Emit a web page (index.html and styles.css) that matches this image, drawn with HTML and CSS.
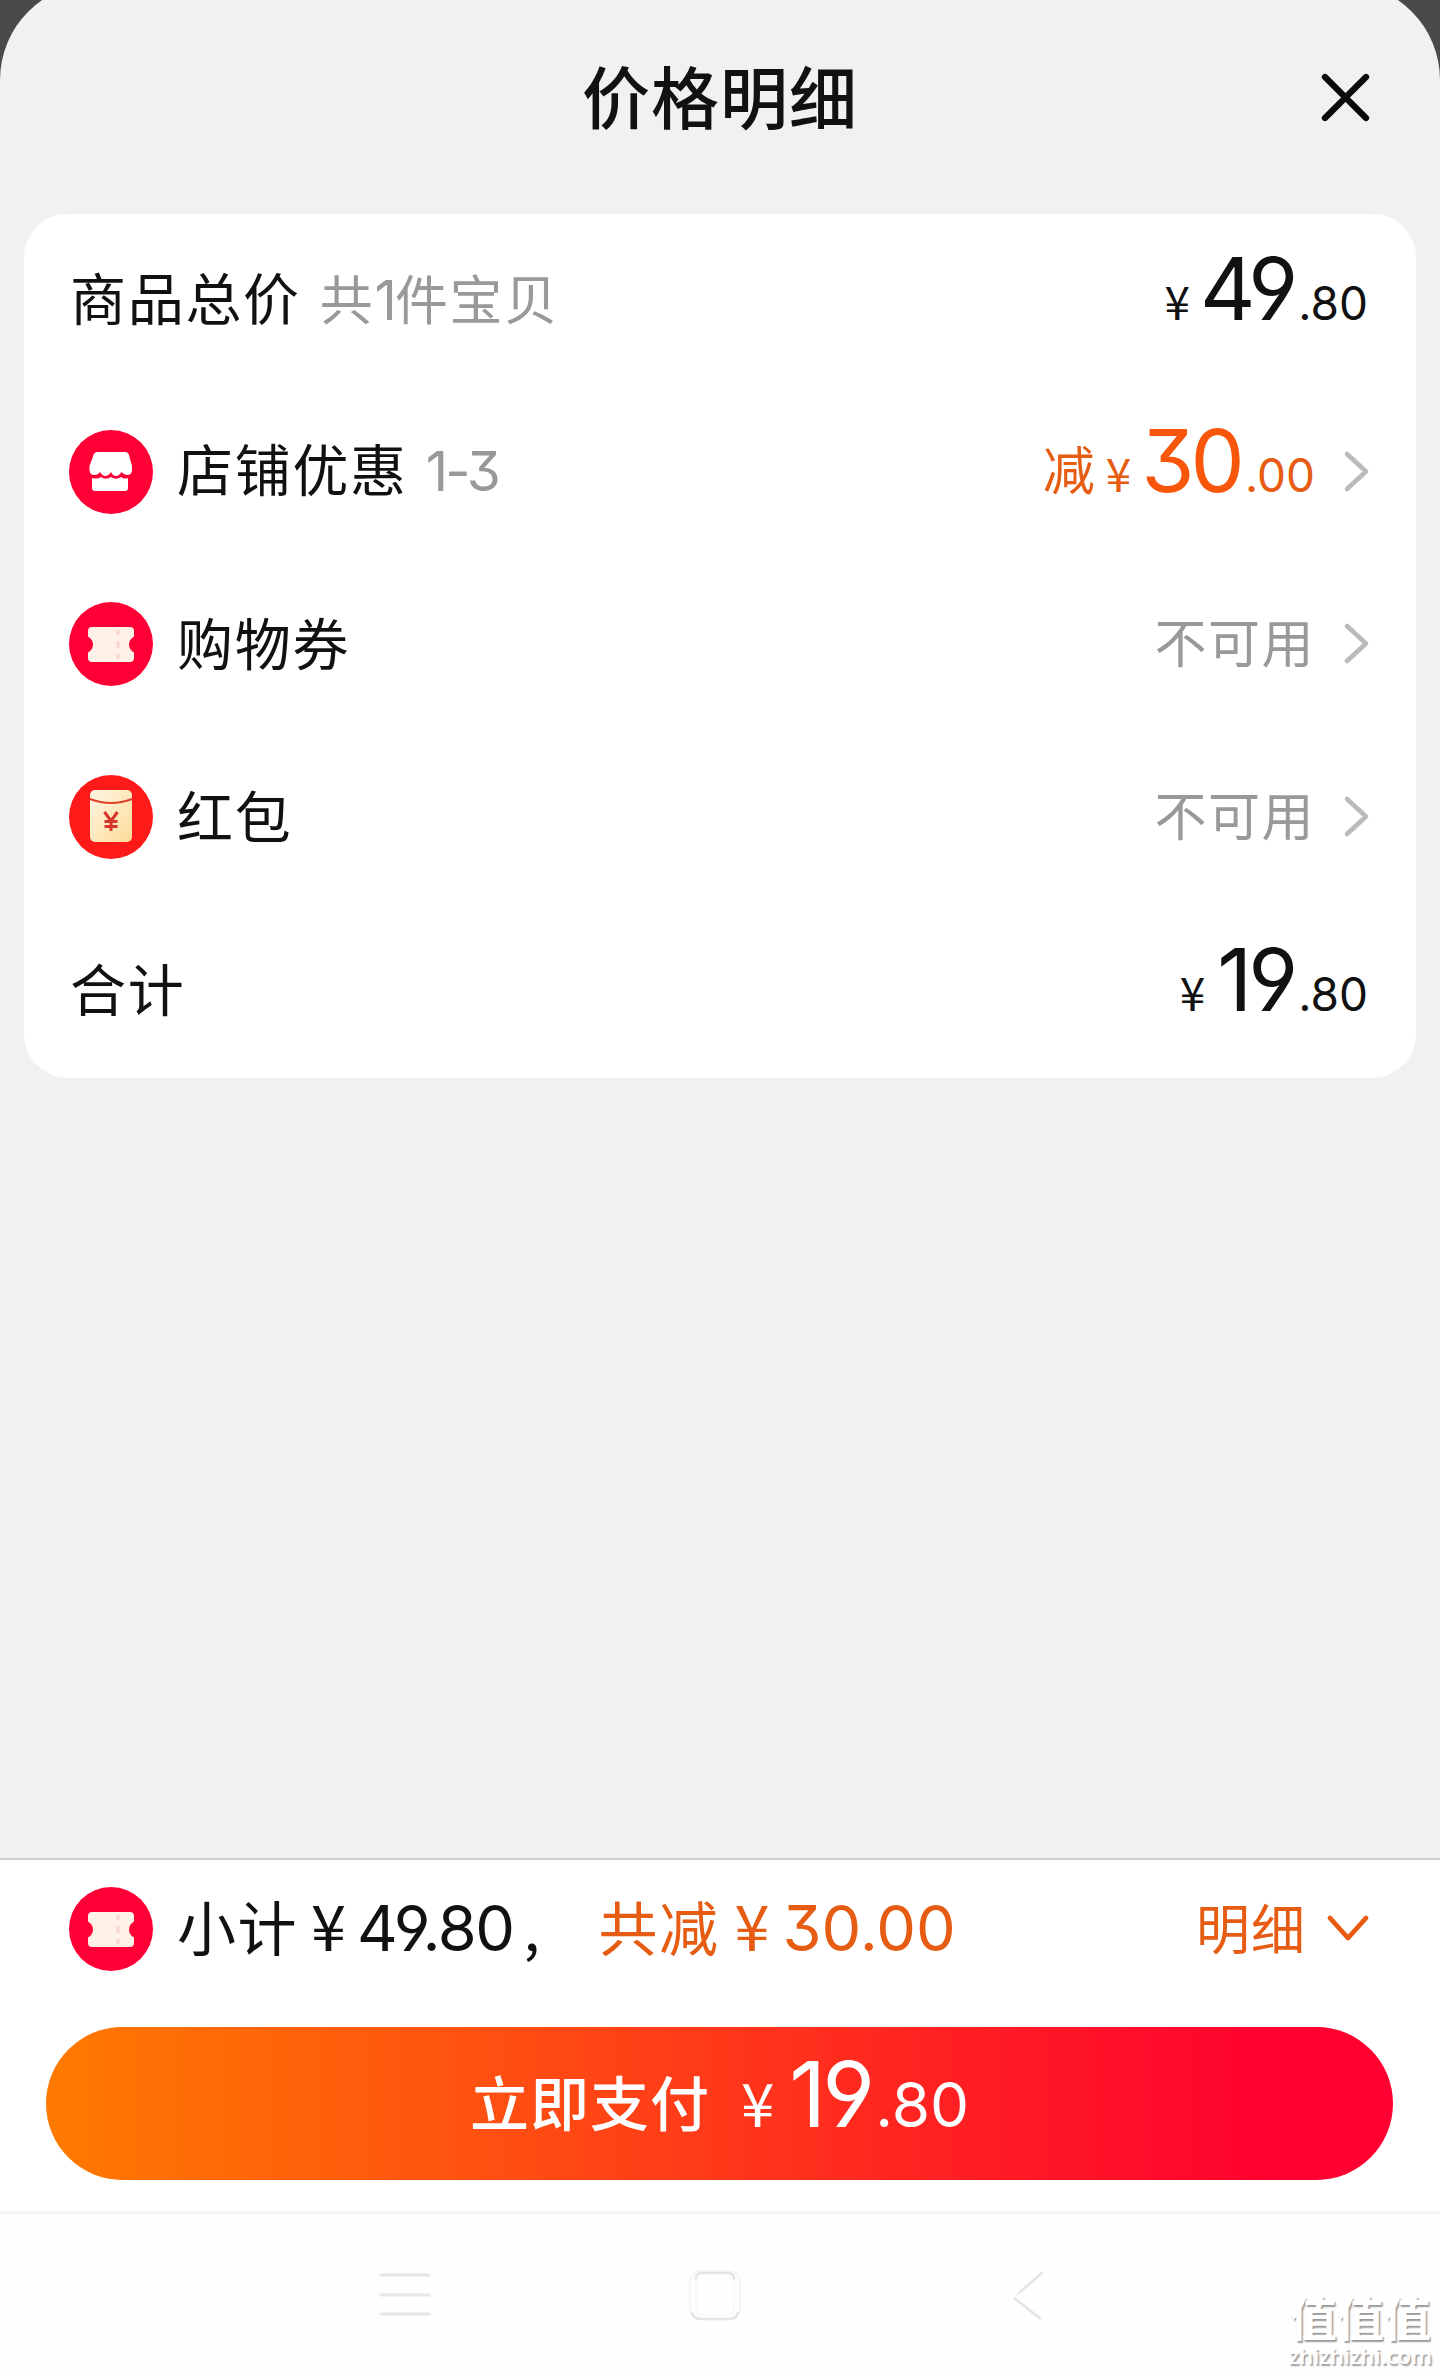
FILE: index.html
```html
<!DOCTYPE html>
<html lang="zh-CN">
<head>
<meta charset="utf-8">
<title>价格明细</title>
<link rel="stylesheet" href="styles.css">
</head>
<body>
<svg class="defs" width="0" height="0" aria-hidden="true">
  <defs>
    <linearGradient id="envelope" x1="0" y1="0" x2="1" y2="1">
      <stop offset="0" stop-color="#fff6e6"/>
      <stop offset="1" stop-color="#fddc97"/>
    </linearGradient>
    <symbol id="ticket" viewBox="0 0 84 84">
      <circle cx="42" cy="42" r="42" fill="#ff0036"/>
      <path d="M23 25h38q4 0 4 4v5.500q-5 3-5 8t5 8V56q0 4-4 4H23q-4 0-4-4v-5.500q5-3 5-8t-5-8V29q0-4 4-4z" fill="#fff0e8"/>
      <path d="M49 28v5M49 39v7M49 52v5" stroke="#f8d5cb" stroke-width="3"/>
    </symbol>
    <symbol id="chevron" viewBox="0 0 28 44">
      <path d="M4 4l19 17.500L4 39" fill="none" stroke="#bababa" stroke-width="4.600" stroke-linecap="round" stroke-linejoin="round"/>
    </symbol>
  </defs>
</svg>
<main class="sheet">
  <header class="header">
    <h1 class="title">价格明细</h1>
    <svg class="close" viewBox="0 0 52 52"><path d="M5 5l41 41M46 5L5 46" stroke="#0b0b0b" stroke-width="6.300" stroke-linecap="round"/></svg>
  </header>

  <section class="card">
    <div class="row">
      <div class="label">商品总价<span class="note">共<span class="num">1</span>件宝贝</span></div>
      <div class="price"><span class="yen">¥</span><span class="whole">49</span><span class="cents">.80</span></div>
    </div>
    <div class="row">
      <svg class="icon" viewBox="0 0 84 84">
        <circle cx="42" cy="42" r="42" fill="#ff0036"/>
        <path d="M29 22h27q3 0 4 3l3 11v4q0 5-5 5-3 0-5.500-3-2.500 4-5.500 4-3 0-5-4-2.500 4-5.500 4-3 0-5.500-4-2 3-5.500 3-5 0-5-5v-4l4-11q1-3 4-3z" fill="#fff"/>
        <path d="M23 48q6 1.500 9-1 5 3.500 10 0 5 3.500 10 0 3 2.500 7 1v10q0 3-3 3H26q-3 0-3-3z" fill="#fff"/>
      </svg>
      <div class="label">店铺优惠<span class="note range"><span class="num">1-3</span></span></div>
      <div class="price discount"><span class="minus">减</span><span class="yen">¥</span><span class="whole">30</span><span class="cents">.00</span></div>
      <svg class="chevron"><use href="#chevron"/></svg>
    </div>
    <div class="row">
      <svg class="icon"><use href="#ticket"/></svg>
      <div class="label">购物券</div>
      <div class="status">不可用</div>
      <svg class="chevron"><use href="#chevron"/></svg>
    </div>
    <div class="row">
      <svg class="icon" viewBox="0 0 84 84">
        <circle cx="42" cy="42" r="42" fill="#ff1a1a"/>
        <rect x="21" y="15" width="42" height="52" rx="5" fill="url(#envelope)"/>
        <path d="M21 24q21 8 42 0" fill="none" stroke="#e0402c" stroke-width="2.200"/>
        <path d="M35.500 37l6.500 9 6.500-9M42 46v10M35.500 46.500h13M35.500 51.500h13" fill="none" stroke="#d8352c" stroke-width="3"/>
      </svg>
      <div class="label">红包</div>
      <div class="status">不可用</div>
      <svg class="chevron"><use href="#chevron"/></svg>
    </div>
    <div class="row">
      <div class="label">合计</div>
      <div class="price total"><span class="yen">¥</span><span class="whole">19</span><span class="cents">.80</span></div>
    </div>
  </section>
</main>

<footer class="footer">
  <div class="summary">
    <svg class="icon"><use href="#ticket"/></svg>
    <div class="sum">小计<span class="sum-yen">¥</span><span class="num">49.80</span><span class="comma">,</span></div>
    <div class="sum saved">共减<span class="sum-yen">¥</span><span class="num wide">30.00</span></div>
    <div class="toggle">明细</div>
    <svg class="toggle-arrow" viewBox="0 0 44 30"><path d="M4 4l18 20L40 4" fill="none" stroke="#ea5a10" stroke-width="4.800" stroke-linecap="round" stroke-linejoin="round"/></svg>
  </div>
  <div class="pay">
    <span class="pay-text">立即支付</span>
    <div class="price pay-price"><span class="yen">¥</span><span class="whole">19</span><span class="cents">.80</span></div>
  </div>
</footer>

<nav class="nav">
  <svg class="nav-icon menu" viewBox="0 0 56 56"><path d="M4 8h48M4 28h48M4 47h48" stroke="#e6e6e6" stroke-width="3" stroke-linecap="round"/></svg>
  <svg class="nav-icon home" viewBox="0 0 56 56"><rect x="3" y="4" width="50" height="48" rx="11" fill="none" stroke="#f3f3f3" stroke-width="1.500"/><path d="M9 12q0-6 6-6h26q6 0 6 6M5 46q2 6 9 6h28q7 0 9-6" fill="none" stroke="#e4e4e4" stroke-width="2.500" stroke-linecap="round"/><path d="M9 12v30q0 6 6 6h26q6 0 6-6V12" fill="none" stroke="#f5f5f5" stroke-width="1.200"/></svg>
  <svg class="nav-icon back" viewBox="0 0 56 56"><path d="M42 5L18 26M13 31l27 21" fill="none" stroke="#e4e4e4" stroke-width="2.500"/><path d="M18 26q-5 3-5 5" fill="none" stroke="#f1f1f1" stroke-width="2"/></svg>
  <div class="mark"><span class="mark-name">值值值</span><span class="mark-site">zhizhizhi.com</span></div>
</nav>
</body>
</html>
```
FILE: styles.css
```css
* { box-sizing: border-box; margin: 0; padding: 0; }

body {
  width: 1440px;
  height: 2376px;
  display: flex;
  flex-direction: column;
  overflow: hidden;
  background: #4a4a4a;
  color: #111;
  font-family: "Noto Sans CJK SC", sans-serif;
  line-height: 1;
  white-space: nowrap;
}

.defs { position: absolute; }

.sheet {
  height: 1875px;
  margin-top: -17px;
  flex: none;
  padding-top: 17px;
  border-radius: 97px 97px 0 0;
  background: #f1f1f1;
}

.header {
  height: 214px;
  display: grid;
  grid-template-columns: 1fr auto 1fr;
  align-items: start;
}
.title {
  grid-column: 2;
  margin-top: 60px;
  font-size: 68px;
  font-weight: 500;
  letter-spacing: 1px;
  line-height: 70px;
}
.close {
  justify-self: end;
  width: 52px;
  height: 52px;
  margin: 72px 68px 0 0;
}

.card {
  height: 864px;
  margin: 0 24px;
  padding: 1px 48px 0 45px;
  border-radius: 44px;
  background: #fff;
}
.row {
  height: 172.4px;
  padding-bottom: 3px;
  display: flex;
  align-items: center;
}
.icon { flex: none; width: 84px; height: 84px; }
.icon + .label { margin-left: 24px; padding-bottom: 6px; }
.label {
  flex: 1;
  margin-left: 1px;
  padding-bottom: 4px;
  font-size: 56px;
  letter-spacing: 1.7px;
}
.note {
  margin-left: 19px;
  color: #999;
  font-size: 53px;
  letter-spacing: 1.700px;
}
.num {
  font-family: "Inter", sans-serif;
  font-feature-settings: "cv04", "cv09";
}
.note .num { font-size: 55px; letter-spacing: -2px; }
.range { margin-left: 18px; }
.range .num { letter-spacing: -3px; }
.status {
  padding-bottom: 6px;
  color: #999;
  font-size: 52px;
  letter-spacing: 1.500px;
}
.chevron { flex: none; width: 28px; height: 44px; margin: 0 -3px 0 28px; }

.price {
  display: flex;
  align-items: baseline;
  padding-bottom: 8px;
  line-height: 86px;
}
.yen { font-size: 46px; margin-right: 10px; }
.whole, .cents {
  font-family: "Inter", sans-serif;
  font-feature-settings: "cv04", "cv09";
}
.whole { font-size: 86px; letter-spacing: -4px; margin-right: 4px; }
.cents { font-size: 46px; }
.total { padding-bottom: 4px; }
.total .yen { margin-right: 12px; }
.discount { color: #e65c13; }
.discount .whole { color: #f7560b; }
.minus { font-size: 52px; margin-right: 11px; transform: translateY(-2px); }

.footer {
  flex: none;
  height: 353px;
  border-top: 2px solid #d0d0d0;
  background: #fff;
}
.summary {
  height: 138px;
  padding: 0 69px;
  display: flex;
  align-items: center;
}
.sum {
  margin-left: 24px;
  padding-bottom: 7px;
  font-size: 59px;
  letter-spacing: 1.500px;
}
.sum .num { font-size: 63px; letter-spacing: -1.500px; }
.sum .wide { letter-spacing: 0; }
.sum-yen { margin: 0 11px 0 13px; font-size: 63px; letter-spacing: 0; }
.comma { margin-left: 10px; }
.saved { margin-left: 57px; }
.saved .sum-yen { margin: 0 13px 0 15px; }
.saved, .toggle { color: #e65c13; }
.toggle {
  margin-left: auto;
  padding-bottom: 4px;
  font-size: 54px;
  letter-spacing: 1px;
}
.toggle-arrow { width: 44px; height: 30px; margin: 0 1px 0 20px; }

.pay {
  height: 153px;
  margin: 29px 47px 0 46px;
  display: flex;
  align-items: center;
  justify-content: center;
  border-radius: 77px;
  background: linear-gradient(90deg, #ff7a00 0%, #ff4d12 35%, #ff2022 67%, #ff0030 92%);
  color: #fff;
}
.pay-text { padding-bottom: 6px; font-size: 59px; font-weight: 500; letter-spacing: 1px; }
.pay-price { margin-left: 31px; }
.pay-price .yen { font-size: 60px; margin-right: 15px; }
.pay-price .whole { font-size: 91px; }
.pay-price .cents { font-size: 62px; }

.nav {
  flex: none;
  position: relative;
  height: 165px;
  display: flex;
  align-items: flex-start;
  padding: 53px 0 0 377px;
  border-top: 3px solid #f6f6f6;
  background: #fefefe;
}
.nav-icon { width: 56px; height: 56px; }
.home { margin-left: 254px; }
.back { margin-left: 258px; }
.mark {
  margin: 29px 8px 0 auto;
  display: flex;
  flex-direction: column;
  align-items: center;
  color: #fff;
  text-shadow: 1.500px 1.500px 1.500px #999;
}
.mark-name {
  font-family: "Liberation Sans", "Noto Sans CJK SC", sans-serif;
  font-size: 47px;
  font-weight: 700;
  line-height: 48px;
}
.mark-site {
  font-family: "Open Sans", sans-serif;
  font-size: 22px;
  font-weight: 600;
  line-height: 22px;
}
```
